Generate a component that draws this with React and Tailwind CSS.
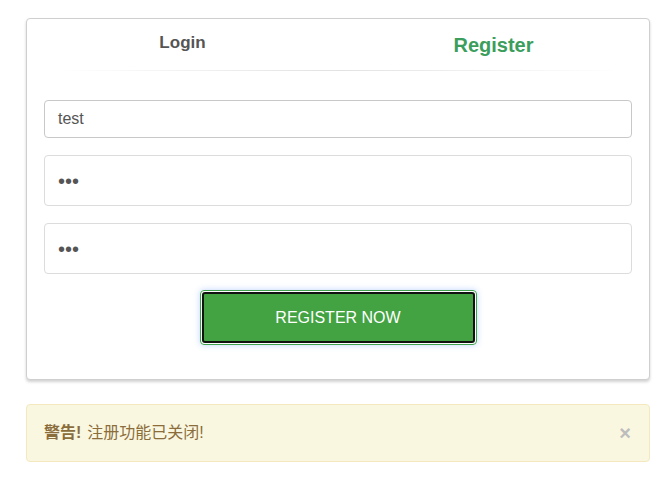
export default function App() {
  return (
    <div
      className="w-[670px] h-[478px] bg-white pt-[18px] pl-[26px]"
      style={{ fontFamily: '"Liberation Sans", Arial, "Noto Sans CJK SC", sans-serif' }}
    >
      <div className="w-[624px] h-[362px] border border-[#cfcfcf] rounded-[4px] bg-white shadow-[0_2px_3px_rgba(0,0,0,0.18)]">
        <div className="grid grid-cols-2 h-[51px]">
          <div className="flex justify-center pt-[11px] text-[17px] font-bold text-[#555]">Login</div>
          <div className="flex justify-center pt-[11px] text-[20px] font-bold text-[#3b9e5c]">Register</div>
        </div>
        <div className="mx-[28px] h-px bg-gradient-to-r from-transparent via-[#e2e2e2] to-transparent" />
        <div className="px-[17px] pt-[29px] flex flex-col">
          <div className="h-[38px] border border-[#c8c8c8] rounded-[4px] flex items-center px-[13px] text-[16px] text-[#555]">
            test
          </div>
          <div className="mt-[17px] h-[51px] border border-[#dcdcdc] rounded-[4px] flex items-center px-[13px] text-[20px] text-[#555]">
            •••
          </div>
          <div className="mt-[17px] h-[51px] border border-[#dcdcdc] rounded-[4px] flex items-center px-[13px] text-[20px] text-[#555]">
            •••
          </div>
          <div className="flex justify-center mt-[16px]">
            <button className="w-[277px] h-[55px] rounded-[4px] border border-[#3fa34d] p-px shadow-[0_0_6px_rgba(110,160,255,0.45)]">
              <div className="w-full h-full rounded-[3px] border-2 border-[#111] bg-[#43a342] flex items-center justify-center text-white text-[16px]">
                REGISTER NOW
              </div>
            </button>
          </div>
        </div>
      </div>
      <div className="mt-[24px] w-[624px] h-[58px] rounded-[4px] border border-[#f3e8c0] bg-[#faf7e1] flex items-center justify-between pl-[17px] pr-[18px] text-[#8a6d3b] text-[16px]">
        <div className="flex items-center">
          <span className="font-bold">警告!</span>
          <span className="ml-[6px]">注册功能已关闭!</span>
        </div>
        <span className="text-[#bdbdbd] text-[20px] font-bold leading-none">×</span>
      </div>
    </div>
  );
}
